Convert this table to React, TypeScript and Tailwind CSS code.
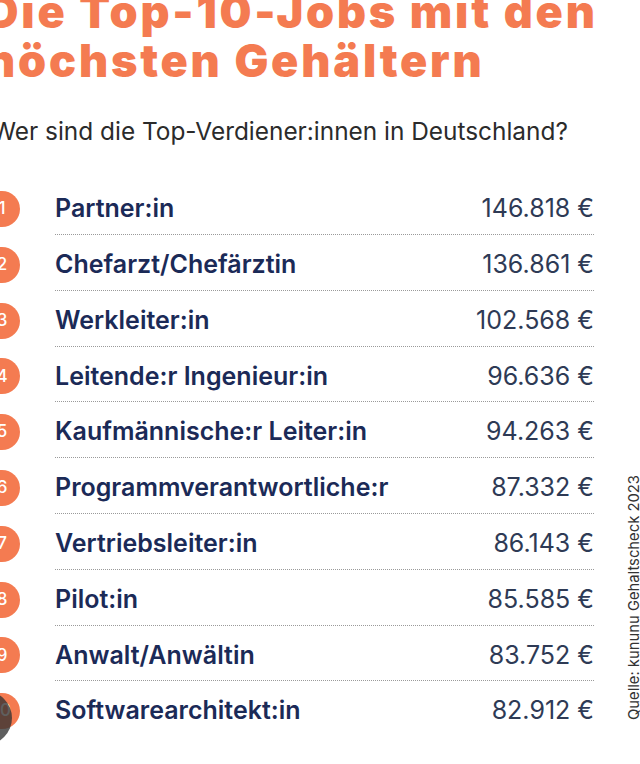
import React from "react";

const rows: [string, string][] = [
  ["Partner:in", "146.818 €"],
  ["Chefarzt/Chefärztin", "136.861 €"],
  ["Werkleiter:in", "102.568 €"],
  ["Leitende:r Ingenieur:in", "96.636 €"],
  ["Kaufmännische:r Leiter:in", "94.263 €"],
  ["Programmverantwortliche:r", "87.332 €"],
  ["Vertriebsleiter:in", "86.143 €"],
  ["Pilot:in", "85.585 €"],
  ["Anwalt/Anwältin", "83.752 €"],
  ["Softwarearchitekt:in", "82.912 €"],
];

export default function App() {
  return (
    <div
      className="relative w-[640px] h-[764px] overflow-hidden bg-white"
      style={{ fontFamily: "Inter, 'Noto Sans', sans-serif" }}
    >
      <div className="ml-[-14px] mt-[-13px] text-[45px] leading-[49px] font-black text-[#F47B51] tracking-[2.8px] whitespace-nowrap">
        <div>Die Top-10-Jobs mit den</div>
        <div>höchsten Gehältern</div>
      </div>
      <div className="ml-[-8px] mt-[31px] text-[24.4px] leading-[30px] text-[#2b2b2b] whitespace-nowrap">
        Wer sind die Top-Verdiener:innen in Deutschland?
      </div>
      <div className="mt-[38px] flex flex-row">
        <div className="w-[594px] flex flex-col">
          {rows.map(([name, val], i) => (
            <div key={i} className="flex flex-row h-[55.8px]">
              <div className="ml-[-16px] mt-[7px] w-[36px] h-[36px] rounded-full bg-[#F47B51] flex items-center justify-center text-white text-[17px] font-medium shrink-0">
                {i + 1}
              </div>
              <div className="ml-[35px] flex-1 flex flex-col">
                <div className="h-[50px] flex items-center justify-between">
                  <span className="text-[25px] font-semibold text-[#1B2A57] whitespace-nowrap">{name}</span>
                  <span className="text-[25px] text-[#2E3A55] whitespace-nowrap">{val}</span>
                </div>
                {i < rows.length - 1 && (
                  <div className="border-b border-dotted border-[#9a9a9a]" />
                )}
              </div>
            </div>
          ))}
        </div>
        <div className="flex-1 flex items-end justify-end pb-[22px] mr-[-5px]">
          <div className="[writing-mode:vertical-rl] rotate-180 text-[14.8px] text-[#333] whitespace-nowrap">
            Quelle: kununu Gehaltscheck 2023
          </div>
        </div>
      </div>
      <div className="absolute left-[-42px] top-[691px] w-[54px] h-[54px] rounded-full bg-[rgba(50,50,50,0.78)]" />
    </div>
  );
}
